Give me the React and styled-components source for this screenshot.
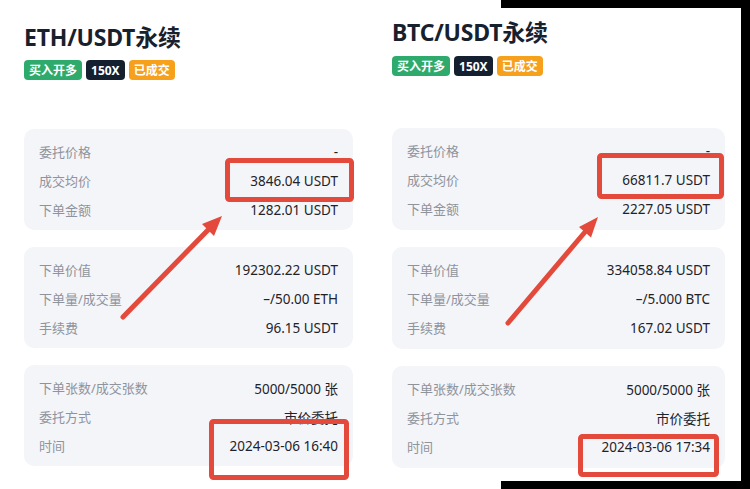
import React from 'react';
import styled, { createGlobalStyle } from 'styled-components';

const GlobalStyle = createGlobalStyle`
  html, body {
    margin: 0;
    padding: 0;
    background: #ffffff;
  }
  body {
    font-family: "Noto Sans", "Noto Sans CJK SC", sans-serif;
  }
`;

const Canvas = styled.div`
  position: relative;
  display: flex;
  width: 750px;
  height: 489px;
  overflow: hidden;
  background: linear-gradient(to right, #ffffff 501px, #000000 501px);
`;

const Shot = styled.div`
  box-sizing: border-box;
  width: ${(p) => p.$width}px;
  margin: ${(p) => p.$margin};
  padding: ${(p) => p.$padding};
  background: #ffffff;
  display: flex;
  flex-direction: column;
`;

const Title = styled.h1`
  margin: 0;
  font-size: 23px;
  line-height: 30px;
  font-weight: 700;
  color: #17212e;
  letter-spacing: -0.2px;
`;

const Tags = styled.div`
  display: flex;
  gap: 4px;
  margin-top: ${(p) => p.$top}px;
`;

const Tag = styled.span`
  display: inline-flex;
  align-items: center;
  height: 20px;
  padding: 0 5px;
  border-radius: 4px;
  font-size: 12px;
  font-weight: 700;
  color: #ffffff;
  background: ${(p) => p.$color};
`;

const Cards = styled.div`
  display: flex;
  flex-direction: column;
  gap: 17px;
  margin-top: ${(p) => p.$top}px;
`;

const Card = styled.div`
  background: #f4f5f9;
  border-radius: 10px;
  padding: 8px 15px ${(p) => p.$bottom}px;
`;

const Row = styled.div`
  display: flex;
  justify-content: space-between;
  align-items: center;
  height: 29px;
`;

const Label = styled.span`
  font-size: 13px;
  color: #8f939c;
`;

const Value = styled.span`
  font-size: 13.5px;
  color: #1f2329;
`;

const Marks = styled.svg`
  position: absolute;
  left: 0;
  top: 0;
  pointer-events: none;
`;

const orders = [
  {
    pair: 'ETH/USDT永续',
    width: 368,
    margin: '0',
    padding: '22px 15px 0 24px',
    tagTop: 8,
    cardTop: 49,
    cardBottom: 6,
    groups: [
      [['委托价格', '-'], ['成交均价', '3846.04 USDT'], ['下单金额', '1282.01 USDT']],
      [['下单价值', '192302.22 USDT'], ['下单量/成交量', '–/50.00 ETH'], ['手续费', '96.15 USDT']],
      [['下单张数/成交张数', '5000/5000 张'], ['委托方式', '市价委托'], ['时间', '2024-03-06 16:40']],
    ],
  },
  {
    pair: 'BTC/USDT永续',
    width: 373,
    margin: '8px 0 8px 0',
    padding: '9px 16px 0 24px',
    tagTop: 9,
    cardTop: 52,
    cardBottom: 7,
    groups: [
      [['委托价格', '-'], ['成交均价', '66811.7 USDT'], ['下单金额', '2227.05 USDT']],
      [['下单价值', '334058.84 USDT'], ['下单量/成交量', '–/5.000 BTC'], ['手续费', '167.02 USDT']],
      [['下单张数/成交张数', '5000/5000 张'], ['委托方式', '市价委托'], ['时间', '2024-03-06 17:34']],
    ],
  },
];

const RED = '#e34a3b';

const Arrow = ({ from, tip, base, wings }) => (
  <g>
    <line x1={from[0]} y1={from[1]} x2={base[0]} y2={base[1]} stroke={RED} strokeWidth="5" strokeLinecap="round" />
    <polygon points={`${tip[0]},${tip[1]} ${wings[0][0]},${wings[0][1]} ${wings[1][0]},${wings[1][1]}`} fill={RED} />
  </g>
);

const App = () => {
  return (
    <>
      <GlobalStyle />
      <Canvas>
        {orders.map((o) => (
          <Shot key={o.pair} $width={o.width} $margin={o.margin} $padding={o.padding}>
            <Title>{o.pair}</Title>
            <Tags $top={o.tagTop}>
              <Tag $color="#2eab6c">买入开多</Tag>
              <Tag $color="#142030">150X</Tag>
              <Tag $color="#f6a01c">已成交</Tag>
            </Tags>
            <Cards $top={o.cardTop}>
              {o.groups.map((g, i) => (
                <Card key={i} $bottom={o.cardBottom}>
                  {g.map(([k, v]) => (
                    <Row key={k}>
                      <Label>{k}</Label>
                      <Value>{v}</Value>
                    </Row>
                  ))}
                </Card>
              ))}
            </Cards>
          </Shot>
        ))}
        <Marks width="750" height="489" viewBox="0 0 750 489">
          <g fill="none" stroke={RED} strokeWidth="5">
            <rect x="227.5" y="160.5" width="124" height="39" rx="2" />
            <rect x="211.5" y="421.5" width="135" height="56" rx="2" />
            <rect x="599.5" y="155.5" width="122" height="41" rx="2" />
            <rect x="580.5" y="436.5" width="136" height="38" rx="2" />
          </g>
          <Arrow from={[123, 317]} base={[208, 230]} tip={[222, 216]} wings={[[214, 236], [202, 224]]} />
          <Arrow from={[508, 323]} base={[585, 232]} tip={[598, 217]} wings={[[591, 237.5], [579, 227]]} />
        </Marks>
      </Canvas>
    </>
  );
};

export default App;
